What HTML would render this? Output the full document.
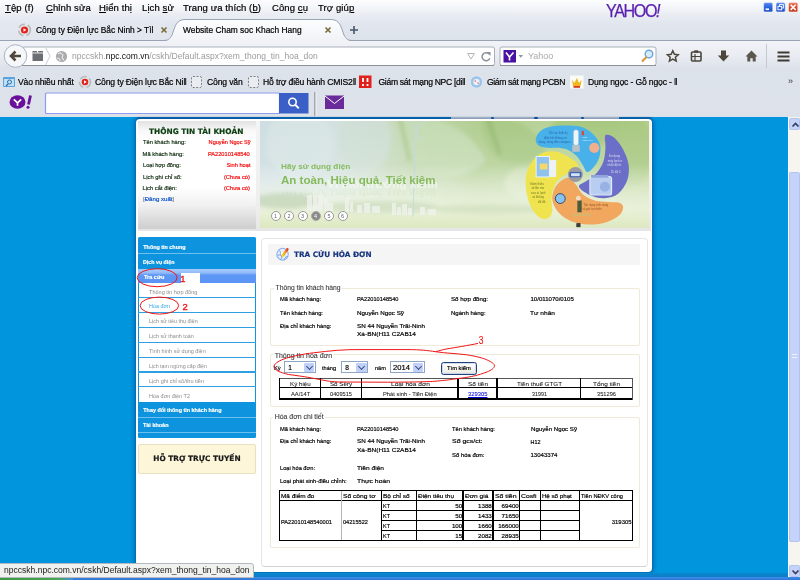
<!DOCTYPE html>
<html lang="vi">
<head>
<meta charset="utf-8">
<title>Website Cham soc Khach Hang</title>
<style>
*{box-sizing:border-box;margin:0;padding:0}
html,body{width:800px;height:580px;overflow:hidden;background:#0095dd}
body{filter:blur(.5px);font-family:"Liberation Sans","DejaVu Sans",sans-serif;font-size:6px;color:#000;position:relative;line-height:1}
.a{position:absolute;white-space:nowrap}
.x{line-height:1.15;transform-origin:0 0;-webkit-text-stroke:.18px currentColor}
#chrome{left:0;top:0;width:800px;height:116.5px;background:linear-gradient(#fdfdfe 0px,#f5f7fa 6px,#eaeef3 14px,#e1e6ee 24px,#dde3eb 40px,#dde2ea 116px)}
.menu{top:3px;font-size:9.5px;color:#000;letter-spacing:.1px;-webkit-text-stroke:.2px #000}
.wb{top:2.5px;width:9.5px;height:9.5px;border-radius:2px;border:.5px solid #fff}
.tabt{top:25.5px;font-size:8.4px;color:#000;-webkit-text-stroke:.2px #000}
.bm{top:77.5px;font-size:8.6px;color:#000;letter-spacing:-.15px;-webkit-text-stroke:.2px #000}
.dot{top:90px;width:10px;height:10px;border-radius:50%;border:1px solid #9a9a9a;background:#fff;font-size:5.5px;line-height:8px;text-align:center;color:#666}
.fs{border:1px solid #ece6d2;border-radius:2px}
.sel{height:12px;border:1px solid #8ea6c6;background:#fff}
.sel i{position:absolute;right:.5px;top:.5px;width:10.5px;height:9px;background:#c1d0fa;border-radius:1px}
.sel i:after{content:"";position:absolute;left:3px;top:1.3px;width:4px;height:4px;border-right:1.5px solid #3d4f7a;border-bottom:1.5px solid #3d4f7a;transform:rotate(45deg)}
.hl{background:#000}
.sb{width:11px;background:#c5d2fa;border-radius:1.5px;border:.5px solid #b3c2ee}
</style>
</head>
<body>
<div id="chrome" class="a">
  <!-- menu bar -->
  <div class="a menu" style="left:5px"><u>T</u>ệp (f)</div>
  <div class="a menu" style="left:46px"><u>C</u>hỉnh sửa</div>
  <div class="a menu" style="left:99px"><u>H</u>iển thị</div>
  <div class="a menu" style="left:142px">Lịch <u>s</u>ử</div>
  <div class="a menu" style="left:183px">Trang ưa thích (<u>b</u>)</div>
  <div class="a menu" style="left:272px">Công <u>c</u>ụ</div>
  <div class="a menu" style="left:318px">Trợ giú<u>p</u></div>
  <div class="a" style="left:605.5px;top:2.5px;font-size:17.5px;line-height:1;letter-spacing:-1.5px;color:#5a1fb0;-webkit-text-stroke:.25px #5a1fb0;transform:scaleX(.92);transform-origin:0 0">YAHOO<i>!</i></div>
  <!-- window buttons -->
  <svg class="a" style="left:760px;top:0" width="40" height="16" viewBox="760 0 40 16">
    <defs>
      <linearGradient id="wbb" x1="0" y1="0" x2="0" y2="1"><stop offset="0" stop-color="#5a8df0"/><stop offset=".5" stop-color="#2b62dc"/><stop offset="1" stop-color="#1f4fc4"/></linearGradient>
      <linearGradient id="wbr" x1="0" y1="0" x2="0" y2="1"><stop offset="0" stop-color="#ee7a5c"/><stop offset=".5" stop-color="#d9472b"/><stop offset="1" stop-color="#c4391f"/></linearGradient>
    </defs>
    <rect x="763.6" y="2.6" width="9.2" height="9.4" rx="1.5" fill="url(#wbb)" stroke="#eef2fb" stroke-width=".6"/>
    <rect x="765.6" y="8.4" width="3.4" height="1.7" fill="#fff"/>
    <rect x="776" y="2.6" width="9.2" height="9.4" rx="1.5" fill="url(#wbb)" stroke="#eef2fb" stroke-width=".6"/>
    <rect x="779.6" y="4.6" width="3.8" height="3.4" fill="none" stroke="#fff" stroke-width=".9"/>
    <rect x="777.9" y="6.4" width="3.8" height="3.4" fill="#2b62dc" stroke="#fff" stroke-width=".9"/>
    <rect x="788.5" y="2.6" width="9.3" height="9.4" rx="1.5" fill="url(#wbr)" stroke="#f6ece8" stroke-width=".6"/>
    <path d="M790.6 4.8 l5.1 5.1 M795.7 4.8 l-5.1 5.1" stroke="#fff" stroke-width="1.5"/>
  </svg>
  <!-- tab strip + nav bar shapes -->
  <svg class="a" style="left:0;top:0" width="800" height="116" viewBox="0 0 800 116">
    <defs>
      <linearGradient id="tabg" x1="0" y1="0" x2="0" y2="1"><stop offset="0" stop-color="#fdfdfe"/><stop offset="1" stop-color="#f1f3f7"/></linearGradient>
      <linearGradient id="navg" x1="0" y1="0" x2="0" y2="1"><stop offset="0" stop-color="#f1f3f7"/><stop offset=".55" stop-color="#e9ecf2"/><stop offset="1" stop-color="#dde2ea"/></linearGradient>
    </defs>
    <!-- nav bar background -->
    <rect x="0" y="40.5" width="800" height="28" fill="url(#navg)"/>
    <!-- inactive tab 1 -->
    <path d="M0 19.5 H158 C166 19.5 166 31 170 37 C172 40 175 40.5 178 40.5 H0 Z" fill="#e6eaf0" opacity=".55"/>
    <!-- tab strip base line -->
    <path d="M0 40.5 H800" stroke="#9aa3b3" stroke-width="1" fill="none"/>
    <!-- active tab -->
    <path d="M163 41 C168 41 170 39 172 35 C175 27 176 19.5 185 19.5 H331 C340 19.5 341 27 344 35 C346 39 348 41 353 41 Z" fill="url(#tabg)"/>
    <path d="M163 40.5 C168 40.5 170 39 172 35 C175 27 176 19.5 185 19.5 H331 C340 19.5 341 27 344 35 C346 39 348 40.5 353 40.5" stroke="#9aa3b3" stroke-width="1" fill="none"/>
    <!-- favicon tab 1 -->
    <g transform="translate(24.5,30)">
      <circle r="5.8" fill="none" stroke="#b9b9b9" stroke-width="1.6" stroke-dasharray="7 3"/>
      <circle r="3.6" fill="#e3231c"/>
      <path d="M-1 -1.8 L1.8 0 L-1 1.8 Z" fill="#fff"/>
    </g>
    <!-- tab close buttons -->
    <path d="M161.5 27.5 l5 5 M166.5 27.5 l-5 5" stroke="#7a6a3a" stroke-width="1.6"/>
    <path d="M325.5 27.5 l5 5 M330.5 27.5 l-5 5" stroke="#7a6a3a" stroke-width="1.6"/>
    <!-- new tab plus -->
    <path d="M350 30 h8 M354 26 v8" stroke="#47566b" stroke-width="1.6"/>

    <!-- url bar -->
    <rect x="22" y="47" width="472.5" height="18.5" rx="2" fill="#fff" stroke="#a9b0bd" stroke-width="1"/>
    <path d="M22 65.5 H494" stroke="#8c929c" stroke-width="1"/>
    <!-- back button -->
    <circle cx="15.5" cy="56" r="11.3" fill="#f6f7f9" stroke="#a7b3c6" stroke-width="1"/>
    <path d="M21 56 H11.5 M15.5 51.5 L11 56 L15.5 60.5" stroke="#4d473b" stroke-width="2.6" fill="none" stroke-linejoin="miter"/>
    <!-- tab-groups icon -->
    <rect x="32.5" y="51" width="10.5" height="10" fill="#6b6e72"/>
    <rect x="32.5" y="52.5" width="10.5" height="1" fill="#e8e8e8"/>
    <rect x="37" y="51" width="1.2" height="1.5" fill="#fff"/>
    <path d="M45.5 47.5 L50 56 L45.5 65" stroke="#c9ccd2" stroke-width="1" fill="none"/>
    <!-- globe -->
    <circle cx="61.5" cy="56.5" r="5.6" fill="#a9abae"/>
    <path d="M58 54 q3 -2 5 1 q-2 3 1 5 M57 58 q3 0 3 3" stroke="#e9e9e9" stroke-width="1.2" fill="none"/>
    <!-- dropdown + reload -->
    <path d="M467.5 53.5 h7 l-3.5 5.5 z" fill="none" stroke="#b3b6bb" stroke-width="1"/>
    <path d="M489 54 a4 4 0 1 0 0.8 4.2" stroke="#8a9099" stroke-width="1.5" fill="none"/>
    <path d="M486.5 52 h4 v4 z" fill="#8a9099"/>
    <!-- search bar -->
    <rect x="500" y="47" width="156" height="18.5" rx="2" fill="#fff" stroke="#a9b0bd" stroke-width="1"/>
    <path d="M500 65.5 H656" stroke="#8c929c" stroke-width="1"/>
    <rect x="503.5" y="50" width="12.5" height="12.5" fill="#4a12a0"/>
    <path d="M506 52.5 l3.5 4.5 v3.5 M513.5 52.5 l-4 4.5" stroke="#fff" stroke-width="1.6" fill="none"/>
    <path d="M518.5 55 h4.5 l-2.250 2.8 z" fill="#8e9299"/>
    <!-- magnifier -->
    <circle cx="649" cy="54" r="3.8" fill="#d6eaf8" stroke="#6aa7d8" stroke-width="1.4"/>
    <path d="M646.5 57 l-4.5 4.5" stroke="#e0902c" stroke-width="2"/>
    <!-- star -->
    <path d="M672.8 50.8 l1.6 3.5 3.8 .4 -2.8 2.6 .8 3.8 -3.4 -1.9 -3.4 1.9 .8 -3.8 -2.8 -2.6 3.8 -.4 z" fill="none" stroke="#4d473b" stroke-width="1.5"/>
    <!-- clipboard -->
    <rect x="691.5" y="52" width="9.5" height="9" rx="1" fill="none" stroke="#4d473b" stroke-width="1.6"/>
    <rect x="694.2" y="50.3" width="4" height="2.5" fill="#4d473b"/>
    <path d="M692 56.5 h9 M695 54 v7" stroke="#4d473b" stroke-width="1.2"/>
    <!-- download -->
    <path d="M721 50.5 h5 v5 h3.2 l-5.7 6 -5.7 -6 h3.2 z" fill="#4d473b"/>
    <!-- home -->
    <path d="M751.5 50.5 l6 6 h-1.8 v5 h-3 v-3.2 h-2.4 v3.2 h-3 v-5 h-1.8 z" fill="#5b574d"/>
    <!-- separator -->
    <path d="M766.5 44 V68" stroke="#c3c8d1" stroke-width="1"/>
    <!-- hamburger -->
    <path d="M777.5 52.5 h12 M777.5 56.5 h12 M777.5 60.5 h12" stroke="#3f3b33" stroke-width="2"/>

    <!-- bookmarks icons -->
    <rect x="3" y="77" width="12" height="10" rx="1" fill="#5aa3dc"/>
    <rect x="4" y="79" width="10" height="7" fill="#bfe0f6"/>
    <circle cx="9.5" cy="82" r="2" fill="none" stroke="#2d6fb0" stroke-width="1"/>
    <path d="M8 84 l-2 2" stroke="#2d6fb0" stroke-width="1.2"/>
    <g transform="translate(85,82)">
      <circle r="5.5" fill="none" stroke="#b9b9b9" stroke-width="1.5" stroke-dasharray="7 3"/>
      <circle r="3.3" fill="#e3231c"/>
      <path d="M-1 -1.7 L1.7 0 L-1 1.7 Z" fill="#fff"/>
    </g>
    <rect x="191.5" y="76.5" width="10" height="11" rx="1.5" fill="#e9edf2" stroke="#7d7f83" stroke-width="1" stroke-dasharray="2 1.5"/>
    <rect x="248.5" y="76.5" width="10" height="11" rx="1.5" fill="#e9edf2" stroke="#7d7f83" stroke-width="1" stroke-dasharray="2 1.5"/>
    <rect x="359" y="75.5" width="12.5" height="12.5" fill="#e0211d"/>
    <path d="M363 78 v4 M367.5 78 v4 M363 84 v2 M367.5 84 v2" stroke="#fff" stroke-width="1.8"/>
    <circle cx="476.5" cy="82" r="6.2" fill="#9cc3e8" stroke="#dfe9f5" stroke-width="1"/>
    <circle cx="476.5" cy="82" r="3.2" fill="#e8f0fa"/>
    <path d="M474.5 81 h1.5 M477.5 83 h1.5" stroke="#d9534f" stroke-width="1.2"/>
    <rect x="570" y="75.5" width="13.5" height="13" fill="#fbfbf5"/>
    <path d="M572 80 l2.5 3 2.3 -5 2.3 5 2.5 -3 -1 6 h-7.6 z" fill="#f2b720"/>
    <rect x="573.5" y="86" width="6.5" height="1.8" fill="#d83a1e"/>
    <text x="588.5" y="85" font-size="8" fill="#333" font-family="Liberation Sans, sans-serif"></text>

    <!-- yahoo toolbar -->
    <ellipse cx="17.5" cy="102" rx="8" ry="6.7" fill="#6a0f9c"/>
    <path d="M13.8 99.3 l3.7 3.5 v3 M21.2 99.3 l-3.7 3.5" stroke="#fff" stroke-width="1.7" fill="none"/>
    <path d="M30.5 95.5 l-2 9" stroke="#6a0f9c" stroke-width="2.8"/>
    <circle cx="28" cy="107.3" r="1.5" fill="#6a0f9c"/>
    <rect x="45.5" y="93" width="234" height="20.5" rx="1" fill="#fff" stroke="#8d9cec" stroke-width="1.2"/>
    <rect x="279" y="93" width="29.5" height="20.5" fill="#3a5fc6"/>
    <circle cx="292.5" cy="102" r="3.7" fill="none" stroke="#fff" stroke-width="1.6"/>
    <path d="M295.2 104.8 l3.6 3.6" stroke="#fff" stroke-width="2"/>
    <path d="M315 92 V116" stroke="#6b6e73" stroke-width="1"/>
    <path d="M316 92 V116" stroke="#f3f5f8" stroke-width="1"/>
    <rect x="325" y="95.5" width="19" height="13.5" fill="#6b2a9a"/>
    <path d="M325 96 l9.5 7.5 l9.5 -7.5" stroke="#fff" stroke-width="1" fill="none"/>
  </svg>

  <!-- tab titles -->
  <div class="a tabt" style="left:36px">Công ty Điện lực Bắc Ninh &gt; Tìl</div>
  <div class="a tabt" style="left:183px">Website Cham soc Khach Hang</div>
  <!-- url -->
  <div class="a" style="left:72px;top:51.6px;font-size:8.54px;color:#9a9ca0">npccskh.<span style="color:#111">npc.com.vn</span>/cskh/Default.aspx?xem_thong_tin_hoa_don</div>
  <div class="a" style="left:528px;top:52.3px;font-size:9px;color:#a8aaae">Yahoo</div>
  <!-- bookmarks -->
  <div class="a bm" style="left:18px">Vào nhiều nhất</div>
  <div class="a bm" style="left:95px">Công ty Điện lực Bắc Ni‖</div>
  <div class="a bm" style="left:207px">Công văn</div>
  <div class="a bm" style="left:263px">Hỗ trợ điều hành CMIS2‖</div>
  <div class="a bm" style="left:378.5px;letter-spacing:-.32px">Giám sát mạng NPC [di‖</div>
  <div class="a bm" style="left:487px;letter-spacing:-.36px">Giám sát mạng PCBN</div>
  <div class="a bm" style="left:588px">Dụng ngọc - Gỗ ngọc - ‖</div>
  <div class="a" style="left:788px;top:76.5px;font-size:9px;color:#333">»</div>
</div>
<!-- ================= PAGE ================= -->
<div class="a" style="left:137px;top:116.5px;width:514px;height:3.2px;background:#0a74bf"></div>
<div class="a" style="left:451px;top:116.5px;width:167.5px;height:3.2px;background:#d9dadb"></div>
<div class="a" style="left:490.8px;top:116.9px;width:3.4px;height:2.3px;background:#0a5db3;border-radius:1px"></div>
<div class="a" style="left:534.3px;top:116.9px;width:3.4px;height:2.3px;background:#0a5db3;border-radius:1px"></div>
<div class="a" style="left:580.8px;top:116.9px;width:3.4px;height:2.3px;background:#0a5db3;border-radius:1px"></div>
<div class="a" style="left:136px;top:119.3px;width:516.2px;height:453px;background:#fff;border-radius:4px;box-shadow:0 0 4.5px .3px rgba(0,50,120,.6);clip-path:inset(-2.8px -8px -4.5px -8px)"></div>
<!-- header band -->
<div class="a" style="left:137.5px;top:121px;width:513px;height:109.5px;background:linear-gradient(#f4f4f4,#eee 80%,#e5e5e5)"></div>
<!-- account panel -->
<div class="a" style="left:138px;top:121px;width:117.5px;height:107.5px;background:linear-gradient(#e2e2e2 0,#f7f7f7 9px,#fff 17px,#fff 66px,#f1f1f1 84px,#cfcfcf 107px)"></div>
<div class="a x" style="left:149px;top:128.43px;font-size:7.6px;color:#0b3d10;font-weight:bold;transform:scaleX(0.973);font-family:'DejaVu Sans','Liberation Sans',sans-serif">THÔNG TIN TÀI KHOẢN</div>
<div class="a x" style="left:142.6px;top:138.91px;font-size:5.8px;color:#102e10;transform:scaleX(0.99)">Tên khách hàng:</div><div class="a x" style="right:550px;top:138.91px;font-size:5.8px;color:#f50808;transform:scaleX(0.963);transform-origin:100% 0">Nguyễn Ngọc Sỹ</div>
<div class="a x" style="left:142.6px;top:150.66px;font-size:5.8px;color:#102e10">Mã khách hàng:</div><div class="a x" style="right:550px;top:150.66px;font-size:5.8px;color:#f50808;transform:scaleX(0.979);transform-origin:100% 0">PA22010148540</div>
<div class="a x" style="left:142.6px;top:162.26px;font-size:5.8px;color:#102e10;transform:scaleX(0.97)">Loại hợp đồng:</div><div class="a x" style="right:550px;top:162.26px;font-size:5.8px;color:#f50808;transform:scaleX(0.98);transform-origin:100% 0">Sinh hoạt</div>
<div class="a x" style="left:142.6px;top:173.66px;font-size:5.8px;color:#102e10;transform:scaleX(1.01)">Lịch ghi chỉ số:</div><div class="a x" style="right:550px;top:173.66px;font-size:5.8px;color:#f50808">(Chưa có)</div>
<div class="a x" style="left:142.6px;top:184.66px;font-size:5.8px;color:#102e10">Lịch cắt điện:</div><div class="a x" style="right:550px;top:184.66px;font-size:5.8px;color:#f50808">(Chưa có)</div>
<div class="a x" style="left:142.8px;top:196.06px;font-size:5.8px;color:#888;transform:scaleX(1.053)">[<span style="color:#0a4fd0">Đăng xuất</span>]</div>
<!-- banner -->
<div class="a" id="banner" style="left:260px;top:121px;width:388.5px;height:107px;overflow:hidden;background:#d5e3d0">
  <svg class="a" style="left:0;top:0" width="389" height="108" viewBox="0 0 389 108">
    <defs>
      <linearGradient id="bg1" x1="0" y1="0" x2="1" y2="0">
        <stop offset="0" stop-color="#cddde2"/><stop offset=".2" stop-color="#d2e1de"/><stop offset=".36" stop-color="#c6dab8"/><stop offset=".55" stop-color="#b3cf94"/><stop offset=".8" stop-color="#b9d49a"/><stop offset="1" stop-color="#b2cf88"/>
      </linearGradient>
      <linearGradient id="bg2" x1="0" y1="0" x2="0" y2="1">
        <stop offset="0" stop-color="#fff" stop-opacity="0"/><stop offset=".4" stop-color="#fff" stop-opacity=".12"/><stop offset=".62" stop-color="#f4f8ee" stop-opacity=".6"/><stop offset=".8" stop-color="#eef4e0" stop-opacity=".92"/><stop offset=".9" stop-color="#e4edcd" stop-opacity="1"/><stop offset="1" stop-color="#dbe7bf" stop-opacity="1"/>
      </linearGradient>
      <filter id="bl" x="-20%" y="-20%" width="140%" height="140%"><feGaussianBlur stdDeviation="2.2"/></filter>
      <filter id="bl1" x="-20%" y="-20%" width="140%" height="140%"><feGaussianBlur stdDeviation=".7"/></filter>
    </defs>
    <rect width="389" height="108" fill="url(#bg1)"/>
    <!-- leaves -->
    <g filter="url(#bl)">
      <ellipse cx="40" cy="22" rx="34" ry="36" fill="#d9e6e6" opacity=".7"/>
      <ellipse cx="105" cy="18" rx="26" ry="34" fill="#cfdfd6" opacity=".8"/>
      <path d="M142 -5 C175 -8 212 8 226 40 C205 62 165 60 150 40 C140 26 138 10 142 -5 Z" fill="#c4dbb4" opacity=".9"/>
      <path d="M222 -4 C250 -6 278 6 286 30 C270 48 240 44 230 30 C224 20 221 8 222 -4 Z" fill="#a9c985" opacity=".9"/>
      <path d="M228 -2 L240 34" stroke="#8fb56c" stroke-width="3" fill="none"/>
      <path d="M140 -2 L150 40" stroke="#9dc07e" stroke-width="2.5" fill="none"/>
      <ellipse cx="330" cy="8" rx="40" ry="16" fill="#a6c77e" opacity=".9"/>
      <ellipse cx="372" cy="30" rx="20" ry="36" fill="#a9c982" opacity=".9"/>
      <ellipse cx="270" cy="62" rx="26" ry="16" fill="#cfe0b8" opacity=".8"/>
    </g>
    <rect width="389" height="108" fill="url(#bg2)"/>
    <!-- treeline + skyline -->
    <g filter="url(#bl)" opacity=".55">
      <ellipse cx="25" cy="80" rx="34" ry="8" fill="#b4cba6"/>
      <ellipse cx="120" cy="86" rx="60" ry="6" fill="#c3d5b3"/>
      <ellipse cx="230" cy="88" rx="60" ry="5" fill="#c9dab6"/>
    </g>
    <g fill="#f0f3ee" opacity=".8" filter="url(#bl1)">
      <rect x="47" y="74" width="5" height="16"/><rect x="53" y="69" width="4" height="21"/><rect x="58" y="72" width="5" height="18"/>
      <rect x="64" y="78" width="4" height="12"/><rect x="68" y="82" width="5" height="8"/>
      <rect x="85" y="76" width="4" height="15"/><rect x="90" y="81" width="3" height="10"/>
      <rect x="97" y="84" width="5" height="8"/><rect x="104" y="82" width="6" height="10"/><rect x="112" y="85" width="8" height="7"/>
      <rect x="132" y="82" width="4" height="12"/><rect x="137" y="86" width="4" height="8"/><rect x="142" y="83" width="5" height="11"/><rect x="148" y="87" width="4" height="7"/>
      <rect x="160" y="86" width="5" height="8"/><rect x="168" y="88" width="8" height="6"/>
    </g>
    <!-- wind turbine -->
    <g stroke="#c4d9e6" stroke-width="1" opacity=".85" fill="none">
      <path d="M156 6 L153 96"/><path d="M156 6 L166 0"/><path d="M156 6 L149 -2"/><path d="M156 6 L160 20"/>
    </g>
    <rect x="316.5" y="102.5" width="3.6" height="3.6" fill="#3d3d3d"/>
  </svg>
  <div class="a" style="left:67px;top:57.5px;font-size:11.5px;font-weight:bold;color:#fff;opacity:.5;letter-spacing:.25px">Vì môi trường xanh</div>
  <div class="a dot" style="left:10.5px">1</div>
  <div class="a dot" style="left:24px">2</div>
  <div class="a dot" style="left:37.5px">3</div>
  <div class="a dot" style="left:50.5px;background:#8a8a8a;color:#fff;border-color:#aaa">4</div>
  <div class="a dot" style="left:64px">5</div>
  <div class="a dot" style="left:77.5px">6</div>
</div>
<div class="a x" style="left:280.75px;top:163.13px;font-size:7.6px;color:#86bb5c;font-weight:bold;transform:scaleX(1.079);-webkit-text-stroke:0">Hãy sử dụng điện</div>
<div class="a x" style="left:280.75px;top:173.56px;font-size:11.2px;color:#86bb5c;font-weight:bold;transform:scaleX(1.033);-webkit-text-stroke:0">An toàn, Hiệu quả, Tiết kiệm</div>
<div class="a x" style="left:280.75px;top:185.06px;font-size:11.2px;color:#86bb5c;font-weight:bold;transform:scaleX(1.033);-webkit-text-stroke:0;opacity:.16;-webkit-mask-image:linear-gradient(transparent 20%,#000)">An toàn, Hiệu quả, Tiết kiệm</div>
<!-- banner pinwheel -->
<svg class="a" style="left:0;top:0" width="800" height="580" viewBox="0 0 800 580">
<path d="M569.12 177.92 C571.57 178.58 573.7 182.01 575.99 184.8 C578.28 187.58 579.76 192 582.87 194.62 C585.98 197.24 590.4 199.27 594.66 200.51 C598.91 201.76 604.32 201.69 608.41 202.09 C612.5 202.48 616.76 201.99 619.21 202.87 C621.67 203.76 623.14 205.33 623.14 207.39 C623.14 209.45 622 212.79 619.21 215.25 C616.43 217.71 611.52 220.59 606.44 222.13 C601.37 223.66 594.66 224.65 588.76 224.48 C582.87 224.32 576.16 223.17 571.08 221.14 C566.01 219.11 561.42 215.74 558.31 212.3 C555.2 208.86 553.07 204.44 552.42 200.51 C551.76 196.59 552.91 192 554.38 188.73 C555.85 185.45 558.8 182.67 561.26 180.87 C563.71 179.07 566.66 177.27 569.12 177.92 Z" fill="#f2a75f"/>
<path d="M549.47 151.4 C552.74 151.07 556.02 151.4 559.29 152.38 C562.57 153.36 566.01 155.16 569.12 157.29 C572.23 159.42 577.96 162.7 577.96 165.15 C577.96 167.61 572.23 169.74 569.12 172.03 C566.01 174.32 561.91 176.12 559.29 178.9 C556.67 181.69 554.71 185.13 553.4 188.73 C552.09 192.33 551.6 196.91 551.43 200.51 C551.27 204.12 552.74 207.55 552.42 210.34 C552.09 213.12 551.27 215.84 549.47 217.21 C547.67 218.59 544.39 219.74 541.61 218.59 C538.83 217.44 535.23 214.33 532.77 210.34 C530.31 206.34 528.02 200.19 526.88 194.62 C525.73 189.05 525.24 182.18 525.89 176.94 C526.55 171.7 528.51 166.95 530.81 163.19 C533.1 159.42 536.54 156.31 539.65 154.35 C542.76 152.38 546.2 151.73 549.47 151.4 Z" fill="#efe350"/>
<path d="M606.44 134.7 C608.02 134.7 611.52 135.19 614.3 137.65 C617.09 140.1 620.75 144.85 623.14 149.43 C625.53 154.02 627.99 159.91 628.64 165.15 C629.3 170.39 628.81 176.12 627.07 180.87 C625.34 185.62 622 190.76 618.23 193.64 C614.47 196.52 609.06 197.83 604.48 198.16 C599.9 198.48 594.98 197.5 590.73 195.6 C586.47 193.7 579.59 189.22 578.94 186.76 C578.28 184.31 583.85 183.16 586.8 180.87 C589.74 178.58 593.84 176.28 596.62 173.01 C599.4 169.74 602.02 165.48 603.5 161.22 C604.97 156.97 605.23 151.4 605.46 147.47 C605.69 143.54 604.71 139.77 604.87 137.65 C605.04 135.52 604.87 134.7 606.44 134.7 Z" fill="#6b6fc7"/>
<path d="M535.72 139.61 C535.88 137.32 537.35 133.88 539.65 131.75 C541.94 129.62 545.21 127.89 549.47 126.84 C553.73 125.79 559.95 125.47 565.19 125.47 C570.43 125.47 576.32 125.47 580.9 126.84 C585.49 128.22 589.58 130.93 592.69 133.72 C595.8 136.5 598.32 140.27 599.57 143.54 C600.81 146.81 600.65 150.09 600.16 153.36 C599.67 156.64 598.68 160.08 596.62 163.19 C594.56 166.3 590.07 171.7 587.78 172.03 C585.49 172.35 584.67 167.77 582.87 165.15 C581.07 162.53 579.27 158.77 576.97 156.31 C574.68 153.85 572.06 151.82 569.12 150.42 C566.17 149.01 562.89 148.29 559.29 147.86 C555.69 147.44 550.94 148.26 547.5 147.86 C544.07 147.47 540.63 146.88 538.66 145.5 C536.7 144.13 535.55 141.9 535.72 139.61 Z" fill="#48b1ea"/>
<circle cx="575.4" cy="174.58" r="7.47" fill="#9b9ba3" />
<rect x="569.51" y="172.03" width="11.79" height="5.3" fill="#3f64ae" rx="1"/>
<rect x="571.08" y="173.21" width="8.64" height="2.95" fill="#d5e3f6" />
<rect x="573.44" y="129.79" width="5.11" height="15.72" fill="#eef5fa" rx="2.5" stroke="#9dbfd6" stroke-width=".6"/>
<rect x="572.26" y="145.11" width="7.47" height="6.68" fill="#b9c2ca" />
<rect x="581.69" y="130.97" width="2.36" height="4.32" fill="#e2463d" />
<circle cx="594.26" cy="147.86" r="5.11" fill="#f1b08c" />
<rect x="536.11" y="156.51" width="13.36" height="20.43" fill="#8fc3ee" stroke="#e6f2fc" stroke-width="1"/>
<rect x="549.47" y="160.04" width="6.68" height="16.9" fill="#eef1f6" />
<rect x="539.65" y="163.58" width="7.86" height="5.89" fill="#f3d86a" />
<rect x="589.94" y="176.55" width="21.61" height="18.47" fill="#b9cdf0" rx="2" stroke="#dfe8fa" stroke-width="1.2"/>
<circle cx="604.87" cy="186.76" r="5.11" fill="#98b2e4" />
<rect x="591.12" y="174.97" width="17.29" height="2.75" fill="#8fa5dc" />
<circle cx="560.28" cy="198.55" r="4.91" fill="#86c3ee" stroke="#2b4a78" stroke-width="1"/>
<rect x="577.37" y="200.51" width="4.32" height="11.79" fill="#4c5a3c" />
<circle cx="578.35" cy="198.16" r="2.36" fill="#f4dcc6" />
<rect x="572.65" y="213.48" width="18.47" height="2.75" fill="#d8b46c" />
<rect x="576.58" y="223.11" width="3.93" height="3.93" fill="#3d3d3d" />
<text x="548.49" y="134.11" fill="#1a4c9a" font-size="2.9" font-family="Liberation Sans, sans-serif" opacity=".8">Tắt các thiết bị</text>
<text x="543.97" y="138.63" fill="#1a4c9a" font-size="2.9" font-family="Liberation Sans, sans-serif" opacity=".8">điện khi không sử</text>
<text x="538.66" y="143.15" fill="#1a4c9a" font-size="2.9" font-family="Liberation Sans, sans-serif" opacity=".8">dụng, dùng đèn compact</text>
<text x="582.48" y="138.43" fill="#fff" font-size="2.4" font-family="Liberation Sans, sans-serif" opacity=".8">TIẾT</text>
<text x="582.48" y="141.18" fill="#fff" font-size="2.2" font-family="Liberation Sans, sans-serif" opacity=".8">KIỆM 80%</text>
<text x="608.8" y="157.29" fill="#f4f4ff" font-size="2.9" font-family="Liberation Sans, sans-serif" opacity=".8">Sử dụng</text>
<text x="607.82" y="161.61" fill="#f4f4ff" font-size="2.9" font-family="Liberation Sans, sans-serif" opacity=".8">máy lạnh ở</text>
<text x="607.43" y="166.13" fill="#f4f4ff" font-size="2.9" font-family="Liberation Sans, sans-serif" opacity=".8">nhiệt độ từ</text>
<text x="610.77" y="173.01" fill="#f4f4ff" font-size="2.9" font-family="Liberation Sans, sans-serif" opacity=".8">25 độ C</text>
<text x="529.82" y="184.8" fill="#4a5d12" font-size="2.9" font-family="Liberation Sans, sans-serif" opacity=".8">Giảm thiểu</text>
<text x="531.39" y="189.12" fill="#4a5d12" font-size="2.9" font-family="Liberation Sans, sans-serif" opacity=".8">số lần mở</text>
<text x="531" y="193.64" fill="#4a5d12" font-size="2.9" font-family="Liberation Sans, sans-serif" opacity=".8">cửa tủ lạnh</text>
<text x="532.18" y="198.16" fill="#4a5d12" font-size="2.9" font-family="Liberation Sans, sans-serif" opacity=".8">và không</text>
<text x="538.07" y="202.87" fill="#4a5d12" font-size="2.9" font-family="Liberation Sans, sans-serif" opacity=".8">để đồ</text>
<text x="583.26" y="206.02" fill="#7a4212" font-size="2.9" font-family="Liberation Sans, sans-serif" opacity=".8">Tận dụng ánh sáng</text>
<text x="582.48" y="210.34" fill="#7a4212" font-size="2.9" font-family="Liberation Sans, sans-serif" opacity=".8">và gió tự nhiên</text>
</svg>
<!-- left menu -->
<div class="a" style="left:138px;top:237.2px;width:118px;height:200.8px;background:#0e93df;border-radius:1.5px"></div>
<div class="a" style="left:138px;top:253.4px;width:118px;height:1px;background:#6cc0f0"></div>
<div class="a" style="left:138px;top:268.7px;width:118px;height:14.1px;background:linear-gradient(#a9ccfb 0,#8fbafa 4px,#5f97f5 6px,#5b94f5 14px)"></div>
<div class="a" style="left:139px;top:282.8px;width:116px;height:118.96px;background:#fff"></div>
<div class="a" style="left:138px;top:297.07px;width:118px;height:1.2px;background:#2e9fe3"></div>
<div class="a x" style="left:148.9px;top:287.54px;font-size:6.2px;color:#8c8c8c;transform:scaleX(0.897);-webkit-text-stroke:0">Thông tin hợp đồng</div>
<div class="a" style="left:138px;top:311.94px;width:118px;height:1.2px;background:#2e9fe3"></div>
<div class="a x" style="left:148.9px;top:302.41px;font-size:6.2px;color:#3aa6ee;transform:scaleX(0.879);-webkit-text-stroke:0">Hóa đơn</div>
<div class="a" style="left:138px;top:326.81px;width:118px;height:1.2px;background:#2e9fe3"></div>
<div class="a x" style="left:148.9px;top:317.28px;font-size:6.2px;color:#8c8c8c;transform:scaleX(0.874);-webkit-text-stroke:0">Lịch sử tiêu thụ điện</div>
<div class="a" style="left:138px;top:341.68px;width:118px;height:1.2px;background:#2e9fe3"></div>
<div class="a x" style="left:148.9px;top:332.15px;font-size:6.2px;color:#8c8c8c;transform:scaleX(0.874);-webkit-text-stroke:0">Lịch sử thanh toán</div>
<div class="a" style="left:138px;top:356.55px;width:118px;height:1.2px;background:#2e9fe3"></div>
<div class="a x" style="left:148.9px;top:347.02px;font-size:6.2px;color:#8c8c8c;transform:scaleX(0.886);-webkit-text-stroke:0">Tình hình sử dụng điện</div>
<div class="a" style="left:138px;top:371.42px;width:118px;height:1.2px;background:#2e9fe3"></div>
<div class="a x" style="left:148.9px;top:361.88px;font-size:6.2px;color:#8c8c8c;transform:scaleX(0.851);-webkit-text-stroke:0">Lịch tạm ngừng cấp điện</div>
<div class="a" style="left:138px;top:386.29px;width:118px;height:1.2px;background:#2e9fe3"></div>
<div class="a x" style="left:148.9px;top:376.75px;font-size:6.2px;color:#8c8c8c;transform:scaleX(0.898);-webkit-text-stroke:0">Lịch ghi chỉ số/thu tiền</div>
<div class="a x" style="left:148.9px;top:391.62px;font-size:6.2px;color:#8c8c8c;transform:scaleX(0.886);-webkit-text-stroke:0">Hóa đơn điện T2</div>
<div class="a x" style="left:143.3px;top:243.5px;font-size:5.4px;color:#fff;font-weight:bold">Thông tin chung</div>
<div class="a x" style="left:143.3px;top:258.5px;font-size:5.4px;color:#fff;font-weight:bold;transform:scaleX(0.982)">Dịch vụ điện</div>
<div class="a x" style="left:143.5px;top:273.59px;font-size:5.4px;color:#fff;font-weight:bold;transform:scaleX(1.025)">Tra cứu</div>
<div class="a x" style="left:143.3px;top:407.09px;font-size:5.4px;color:#fff;font-weight:bold">Thay đổi thông tin khách hàng</div>
<div class="a" style="left:138px;top:417.3px;width:118px;height:1px;background:#6cc0f0"></div>
<div class="a x" style="left:143.3px;top:422.09px;font-size:5.4px;color:#fff;font-weight:bold;transform:scaleX(1.013)">Tài khoản</div>
<div class="a" style="left:138px;top:432.2px;width:118px;height:1px;background:#6cc0f0"></div>
<div class="a" style="left:180.7px;top:272.6px;width:19.1px;height:10.2px;background:#fff"></div>
<!-- support -->
<div class="a" style="left:138px;top:444px;width:118px;height:29.8px;background:#fdf6d9;border:1px solid #e9e1bd;border-radius:2px"></div>
<div class="a x" style="left:153.25px;top:455.25px;font-size:7.4px;color:#1a1a1a;font-weight:bold;font-family:'DejaVu Sans','Liberation Sans',sans-serif">HỖ TRỢ TRỰC TUYẾN</div>
<!-- main panel -->
<div class="a" style="left:260.6px;top:237.5px;width:387px;height:329.1px;background:#fff;border:1px solid #e6e6e6;border-bottom-color:#d2d2d2;border-radius:4px"></div>
<div class="a" style="left:268.1px;top:243.6px;width:372px;height:21.2px;background:#f5f5f5"></div>
<svg class="a" style="left:275.5px;top:246.3px" width="15" height="15" viewBox="0 0 15 15">
  <defs><linearGradient id="pen" x1="0" y1="1" x2="1" y2="0"><stop offset="0" stop-color="#f7d21a"/><stop offset=".55" stop-color="#f59a1c"/><stop offset="1" stop-color="#e5391d"/></linearGradient></defs>
  <ellipse cx="6.6" cy="8.2" rx="5.7" ry="5.9" fill="#e6eefb" stroke="#8fb2ef" stroke-width="1.1"/>
  <path d="M1.6 9.5 C4 7.5 6 10.5 8.5 9 M3.5 4.5 C5 6 4 8 5.5 10 C6 12 5 13 4.5 13.5 M8 13.5 C9.5 12 9 10.5 11.5 10.5" fill="none" stroke="#5f92e8" stroke-width=".9"/>
  <path d="M4.5 6.5 l2.2 -1 l1 2.5 l-2.5 1.5 z" fill="#fff"/>
  <path d="M6.6 9.8 L11.4 3.3" stroke="url(#pen)" stroke-width="2.5" stroke-linecap="round"/>
</svg>
<div class="a x" style="left:293.8px;top:251.19px;font-size:7.5px;color:#17357f;font-weight:bold;transform:scaleX(0.972);font-family:'DejaVu Sans','Liberation Sans',sans-serif">TRA CỨU HÓA ĐƠN</div>
<!-- fieldset: customer -->
<div class="a" style="left:269.5px;top:287.5px;width:370px;height:58.5px;border:1px solid #efe9d8;border-radius:2px"></div>
<div class="a x" style="left:273.5px;top:283.92px;font-size:6.4px;color:#3a3a3a;transform:scaleX(1.057);background:#fff;padding:0 1.5px;-webkit-text-stroke:.1px">Thông tin khách hàng</div>
<div class="a x" style="left:279.5px;top:296.02px;font-size:6.05px;transform:scaleX(0.953)">Mã khách hàng:</div><div class="a x" style="left:357px;top:296.02px;font-size:6.05px;transform:scaleX(0.93)">PA22010148540</div>
<div class="a x" style="left:451px;top:296.02px;font-size:6.05px;transform:scaleX(1.011)">Số hợp đồng:</div><div class="a x" style="left:530.5px;top:296.02px;font-size:6.05px">10/011070/0105</div>
<div class="a x" style="left:279.5px;top:309.52px;font-size:6.05px;transform:scaleX(0.954)">Tên khách hàng:</div><div class="a x" style="left:357px;top:309.52px;font-size:6.05px;transform:scaleX(1.035)">Nguyễn Ngọc Sỹ</div>
<div class="a x" style="left:451px;top:309.52px;font-size:6.05px">Ngành hàng:</div><div class="a x" style="left:530.3px;top:309.52px;font-size:6.05px;transform:scaleX(1.093)">Tư nhân</div>
<div class="a x" style="left:279.5px;top:323.02px;font-size:6.05px;transform:scaleX(0.969)">Địa chỉ khách hàng:</div><div class="a x" style="left:357px;top:322.92px;font-size:6.05px;transform:scaleX(1.037)">SN 44 Nguyễn Trãi-Ninh</div><div class="a x" style="left:357px;top:331.32px;font-size:6.05px;transform:scaleX(1.079)">Xá-BN(H11 C2AB14</div>
<!-- fieldset: invoice search -->
<div class="a" style="left:269.5px;top:354.3px;width:370px;height:52.5px;border:1px solid #efe9d8;border-radius:2px"></div>
<div class="a x" style="left:273.2px;top:351.62px;font-size:6.4px;color:#3a3a3a;transform:scaleX(1.102);background:#fff;padding:0 1.5px;-webkit-text-stroke:.1px">Thông tin hóa đơn</div>
<div class="a x" style="left:273.7px;top:364.82px;font-size:6.05px;transform:scaleX(0.949)">Kỳ</div>
<div class="a sel" style="left:284.3px;top:361.2px;width:31.5px"><i></i></div>
<div class="a x" style="left:288.2px;top:363.81px;font-size:6.6px">1</div>
<div class="a x" style="left:322.3px;top:364.82px;font-size:6.05px;transform:scaleX(0.925)">tháng</div>
<div class="a sel" style="left:341.2px;top:361.2px;width:27.2px"><i></i></div>
<div class="a x" style="left:345.2px;top:363.81px;font-size:6.6px">8</div>
<div class="a x" style="left:374.6px;top:364.82px;font-size:6.05px;transform:scaleX(0.926)">năm</div>
<div class="a sel" style="left:390.2px;top:361.2px;width:34.5px"><i></i></div>
<div class="a x" style="left:392.6px;top:363.81px;font-size:6.6px;transform:scaleX(1.15)">2014</div>
<div class="a" style="left:441.2px;top:362px;width:35.7px;height:12.7px;border:1px solid #20417e;border-radius:2.5px;background:linear-gradient(#fff,#f0efe8 80%,#dcdacd);box-shadow:inset 0 0 0 .8px #c4d2ef"></div>
<div class="a x" style="left:447.4px;top:365.05px;font-size:6px;transform:scaleX(0.965)">Tìm kiếm</div>
<!-- invoice table -->
<div class="a" style="left:278.9px;top:377.9px;width:353.9px;height:0.9px;background:#555"></div>
<div class="a" style="left:278.8px;top:387.1px;width:354.1px;height:1.4px;background:#000"></div>
<div class="a" style="left:278.8px;top:398.4px;width:354.1px;height:1.3px;background:#000"></div>
<div class="a" style="left:278.85px;top:377.9px;width:1.1px;height:21.8px;background:#000"></div>
<div class="a" style="left:319.82px;top:377.9px;width:1.15px;height:21.8px;background:#000"></div>
<div class="a" style="left:361.12px;top:377.9px;width:1.15px;height:21.8px;background:#000"></div>
<div class="a" style="left:457.43px;top:377.9px;width:1.15px;height:21.8px;background:#000"></div>
<div class="a" style="left:496.43px;top:377.9px;width:1.15px;height:21.8px;background:#000"></div>
<div class="a" style="left:579.92px;top:377.9px;width:1.15px;height:21.8px;background:#000"></div>
<div class="a" style="left:631.85px;top:377.9px;width:0.9px;height:21.8px;background:#555"></div>
<div class="a x" style="left:289.85px;top:379.79px;font-size:6.1px;color:#1a1a1a;transform:scaleX(1.018);-webkit-text-stroke:.06px">Ký hiệu</div>
<div class="a x" style="left:330.35px;top:379.79px;font-size:6.1px;color:#1a1a1a;transform:scaleX(1.014);-webkit-text-stroke:.06px">Số Sêry</div>
<div class="a x" style="left:390.65px;top:379.79px;font-size:6.1px;color:#1a1a1a;transform:scaleX(1.088);-webkit-text-stroke:.06px">Loại hóa đơn</div>
<div class="a x" style="left:467.8px;top:379.79px;font-size:6.1px;color:#1a1a1a;transform:scaleX(1.053);-webkit-text-stroke:.06px">Số tiền</div>
<div class="a x" style="left:516.55px;top:379.79px;font-size:6.1px;color:#1a1a1a;transform:scaleX(1.027);-webkit-text-stroke:.06px">Tiền thuế GTGT</div>
<div class="a x" style="left:593.2px;top:379.79px;font-size:6.1px;color:#1a1a1a;transform:scaleX(1.062);-webkit-text-stroke:.06px">Tổng tiền</div>
<div class="a x" style="left:290.6px;top:389.79px;font-size:6.1px;color:#1a1a1a;transform:scaleX(0.945);-webkit-text-stroke:.06px">AA/14T</div>
<div class="a x" style="left:330.35px;top:389.79px;font-size:6.1px;color:#1a1a1a;transform:scaleX(0.927);-webkit-text-stroke:.06px">0409515</div>
<div class="a x" style="left:383.28px;top:389.79px;font-size:6.1px;color:#1a1a1a;transform:scaleX(0.95);-webkit-text-stroke:.06px">Phát sinh - Tiền Điện</div>
<div class="a x" style="left:468.05px;top:389.79px;font-size:6.1px;color:#0000e0;transform:scaleX(0.959);text-decoration:underline;-webkit-text-stroke:.06px">329305</div>
<div class="a x" style="left:531.55px;top:389.79px;font-size:6.1px;color:#1a1a1a;transform:scaleX(0.885);-webkit-text-stroke:.06px">31991</div>
<div class="a x" style="left:597.2px;top:389.79px;font-size:6.1px;color:#1a1a1a;transform:scaleX(0.934);-webkit-text-stroke:.06px">351296</div>
<!-- fieldset: invoice detail -->
<div class="a" style="left:269.5px;top:416.8px;width:370px;height:131.3px;border:1px solid #efe9d8;border-radius:2px"></div>
<div class="a x" style="left:273.2px;top:413.32px;font-size:6.4px;color:#3a3a3a;transform:scaleX(1.088);background:#fff;padding:0 1.5px;-webkit-text-stroke:.1px">Hóa đơn chi tiết</div>
<div class="a x" style="left:279.5px;top:425.72px;font-size:6.05px;transform:scaleX(0.953)">Mã khách hàng:</div><div class="a x" style="left:357px;top:425.72px;font-size:6.05px;transform:scaleX(0.93)">PA22010148540</div>
<div class="a x" style="left:451.5px;top:425.72px;font-size:6.05px;transform:scaleX(0.954)">Tên khách hàng:</div><div class="a x" style="left:530.5px;top:425.72px;font-size:6.05px;transform:scaleX(1.013)">Nguyễn Ngọc Sỹ</div>
<div class="a x" style="left:279.5px;top:438.22px;font-size:6.05px;transform:scaleX(0.969)">Địa chỉ khách hàng:</div><div class="a x" style="left:357px;top:438.02px;font-size:6.05px;transform:scaleX(1.037)">SN 44 Nguyễn Trãi-Ninh</div><div class="a x" style="left:357px;top:446.52px;font-size:6.05px;transform:scaleX(1.079)">Xá-BN(H11 C2AB14</div>
<div class="a x" style="left:451.5px;top:438.22px;font-size:6.05px;transform:scaleX(1.15)">Số gcs/ct:</div><div class="a x" style="left:530.5px;top:438.59px;font-size:5.4px">H12</div>
<div class="a x" style="left:451.5px;top:451.52px;font-size:6.05px;transform:scaleX(0.978)">Số hóa đơn:</div><div class="a x" style="left:530.5px;top:451.52px;font-size:6.05px">13043374</div>
<div class="a x" style="left:279.5px;top:465.02px;font-size:6.05px;transform:scaleX(0.939)">Loại hóa đơn:</div><div class="a x" style="left:357px;top:465.02px;font-size:6.05px;transform:scaleX(1.095)">Tiền điện</div>
<div class="a x" style="left:279.5px;top:477.82px;font-size:6.05px;transform:scaleX(0.965)">Loại phát sinh-điều chỉnh:</div><div class="a x" style="left:357px;top:477.82px;font-size:6.05px;transform:scaleX(1.128)">Thực hoàn</div>
<!-- detail table -->
<div class="a" style="left:278.7px;top:490.1px;width:354.2px;height:1.3px;background:#000"></div>
<div class="a" style="left:278.7px;top:499.9px;width:354.2px;height:1.3px;background:#000"></div>
<div class="a" style="left:278.7px;top:539.5px;width:354.2px;height:1.4px;background:#000"></div>
<div class="a" style="left:381.8px;top:509.65px;width:197.6px;height:1.3px;background:#000"></div>
<div class="a" style="left:381.8px;top:519.75px;width:197.6px;height:1.3px;background:#000"></div>
<div class="a" style="left:381.8px;top:529.85px;width:197.6px;height:1.3px;background:#000"></div>
<div class="a" style="left:278.7px;top:490.1px;width:1.2px;height:50.7px;background:#000"></div>
<div class="a" style="left:340.9px;top:490.7px;width:1px;height:49.4px;background:#b5b5b5"></div>
<div class="a" style="left:381.2px;top:490.1px;width:1.2px;height:50.7px;background:#000"></div>
<div class="a" style="left:416.1px;top:490.1px;width:1.2px;height:50.7px;background:#000"></div>
<div class="a" style="left:462.4px;top:490.1px;width:1.2px;height:50.7px;background:#000"></div>
<div class="a" style="left:492.4px;top:490.1px;width:1.2px;height:50.7px;background:#000"></div>
<div class="a" style="left:519px;top:490.1px;width:1.2px;height:50.7px;background:#000"></div>
<div class="a" style="left:539.7px;top:490.1px;width:1.2px;height:50.7px;background:#000"></div>
<div class="a" style="left:578.8px;top:490.1px;width:1.2px;height:50.7px;background:#000"></div>
<div class="a" style="left:631.7px;top:490.1px;width:1.2px;height:50.7px;background:#000"></div>
<div class="a x" style="left:280.9px;top:492.24px;font-size:6.2px;transform:scaleX(1.033)">Mã điểm đo</div>
<div class="a x" style="left:343px;top:492.24px;font-size:6.2px;transform:scaleX(1.079)">Số công tơ</div>
<div class="a x" style="left:383.4px;top:492.24px;font-size:6.2px;transform:scaleX(1.049)">Bộ chỉ số</div>
<div class="a x" style="left:418.3px;top:492.24px;font-size:6.2px;transform:scaleX(1.036)">Điện tiêu thụ</div>
<div class="a x" style="left:464.6px;top:492.24px;font-size:6.2px;transform:scaleX(1.061)">Đơn giá</div>
<div class="a x" style="left:494.6px;top:492.24px;font-size:6.2px;transform:scaleX(1.116)">Số tiền</div>
<div class="a x" style="left:521.2px;top:492.24px;font-size:6.2px;transform:scaleX(1.099)">Cosfi</div>
<div class="a x" style="left:541.9px;top:492.24px;font-size:6.2px">Hệ số phạt</div>
<div class="a x" style="left:581px;top:492.24px;font-size:6.2px;transform:scaleX(0.916)">Tiền NĐKV công</div>
<div class="a x" style="left:281.2px;top:517.93px;font-size:6.2px;transform:scaleX(0.911)">PA22010148540001</div>
<div class="a x" style="left:342.7px;top:517.93px;font-size:6.2px;transform:scaleX(0.908)">04215522</div>
<div class="a x" style="right:168.2px;top:517.93px;font-size:6.2px;transform:scaleX(0.968);transform-origin:100% 0">319305</div>
<div class="a x" style="left:383.4px;top:502.03px;font-size:6.2px;transform:scaleX(0.884)">KT</div>
<div class="a x" style="right:337.8px;top:502.03px;font-size:6.2px">50</div><div class="a x" style="right:308.2px;top:502.03px;font-size:6.2px">1388</div><div class="a x" style="right:281.2px;top:502.03px;font-size:6.2px">69400</div>
<div class="a x" style="left:383.4px;top:511.99px;font-size:6.2px;transform:scaleX(0.884)">KT</div>
<div class="a x" style="right:337.8px;top:511.99px;font-size:6.2px">50</div><div class="a x" style="right:308.2px;top:511.99px;font-size:6.2px">1433</div><div class="a x" style="right:281.2px;top:511.99px;font-size:6.2px">71650</div>
<div class="a x" style="left:383.4px;top:522.09px;font-size:6.2px;transform:scaleX(0.884)">KT</div>
<div class="a x" style="right:337.8px;top:522.09px;font-size:6.2px">100</div><div class="a x" style="right:308.2px;top:522.09px;font-size:6.2px">1660</div><div class="a x" style="right:281.2px;top:522.09px;font-size:6.2px">166000</div>
<div class="a x" style="left:383.4px;top:531.93px;font-size:6.2px;transform:scaleX(0.884)">KT</div>
<div class="a x" style="right:337.8px;top:531.93px;font-size:6.2px">15</div><div class="a x" style="right:308.2px;top:531.93px;font-size:6.2px">2082</div><div class="a x" style="right:281.2px;top:531.93px;font-size:6.2px">28935</div>
<!-- annotations -->
<svg class="a" style="left:0;top:0" width="800" height="580" viewBox="0 0 800 580">
  <g fill="none" stroke="#ee1515" stroke-width="1">
    <ellipse cx="157.2" cy="277.7" rx="20" ry="9"/>
    <ellipse cx="159.4" cy="305.6" rx="19.3" ry="8.5"/>
    <path d="M274 366 C276 360 292 355.5 313.5 352.8 C330 350.8 345 349.3 360 349.6 L408 349.6 C420 349.6 428 350.5 435.5 351.7 C446 353.3 456 353.4 466.5 354.8 C478 356.5 484 358.5 487.2 360 C492 362.2 494.5 364 494.5 365.7 C494.5 368 491 370.5 487.2 371.9 C482 373.8 478 375 475.8 375.5 C470 377 466 377.5 461.4 378.1 C452 379.3 446 380.3 440.7 380.7 C436 381.2 433 381.5 430.3 381.5 C420 382 400 382.3 380 382.2 L340 382 C332 381.8 329 381.2 326 380.7 C320 379.7 316 378.8 311.4 377.9 C302 376.2 296 375.5 288.7 374.5 C280 372.5 273.5 370 274 366 Z"/>
    <path d="M435.5 351.7 C440 350.5 443 349.6 445.9 349.1 C452 348 457 347.3 461.4 346.5 C468 345.3 474 344.3 478 343.4"/>
  </g>
  <g fill="#ee1515" stroke="#ee1515" stroke-width=".35" font-family="Liberation Sans, sans-serif">
    <text x="180.3" y="281.6" font-size="9.4">1</text>
    <text x="182.6" y="309.9" font-size="9.4">2</text>
    <text x="478.8" y="343.9" font-size="10" stroke-width=".1" transform="translate(478.8 343.9) scale(.85 1) translate(-478.8 -343.9)">3</text>
  </g>
</svg>
<!-- scrollbar -->
<div class="a" style="left:787.5px;top:116.5px;width:12.5px;height:461px;background:#f6f5ef;border-left:1px solid #fdfdfb"></div>
<div class="a sb" style="left:788.500px;top:117.500px;height:12px"><svg width="11" height="12" viewBox="0 0 11 12"><path d="M2.5 7.5 L5.5 4.5 L8.5 7.5" stroke="#36405e" stroke-width="1.7" fill="none"/></svg></div>
<div class="a sb" style="left:788.500px;top:172px;height:369.500px"></div>
<div class="a" style="left:791.5px;top:354px;width:5px;height:4px;border-top:1px solid #eef2ff;border-bottom:1px solid #eef2ff"></div>
<div class="a sb" style="left:788.500px;top:565px;height:12px"><svg width="11" height="12" viewBox="0 0 11 12"><path d="M2.5 4.5 L5.5 7.5 L8.5 4.5" stroke="#36405e" stroke-width="1.7" fill="none"/></svg></div>
<!-- taskbar + status -->
<div class="a" style="left:0px;top:572.5px;width:787.5px;height:4.8px;background:linear-gradient(#0a86cf,#0a7ec8)"></div>
<div class="a" style="left:0px;top:577px;width:800px;height:3px;background:linear-gradient(#3f8ee8,#2f73d8)"></div>
<div class="a" style="left:0px;top:577px;width:73px;height:3px;background:linear-gradient(90deg,#3a9a44,#48a852 80%,#3f8ee8)"></div>
<div class="a" style="left:-1px;top:562.6px;width:254.5px;height:15.2px;background:#f1f1ef;border:1px solid #b4b8bf;border-radius:0 3px 0 0"></div>
<div class="a x" style="left:4px;top:566.37px;font-size:8.4px;color:#1a1a1a;transform:scaleX(1.018);-webkit-text-stroke:0">npccskh.npc.com.vn/cskh/Default.aspx?xem_thong_tin_hoa_don</div>
</body>
</html>
